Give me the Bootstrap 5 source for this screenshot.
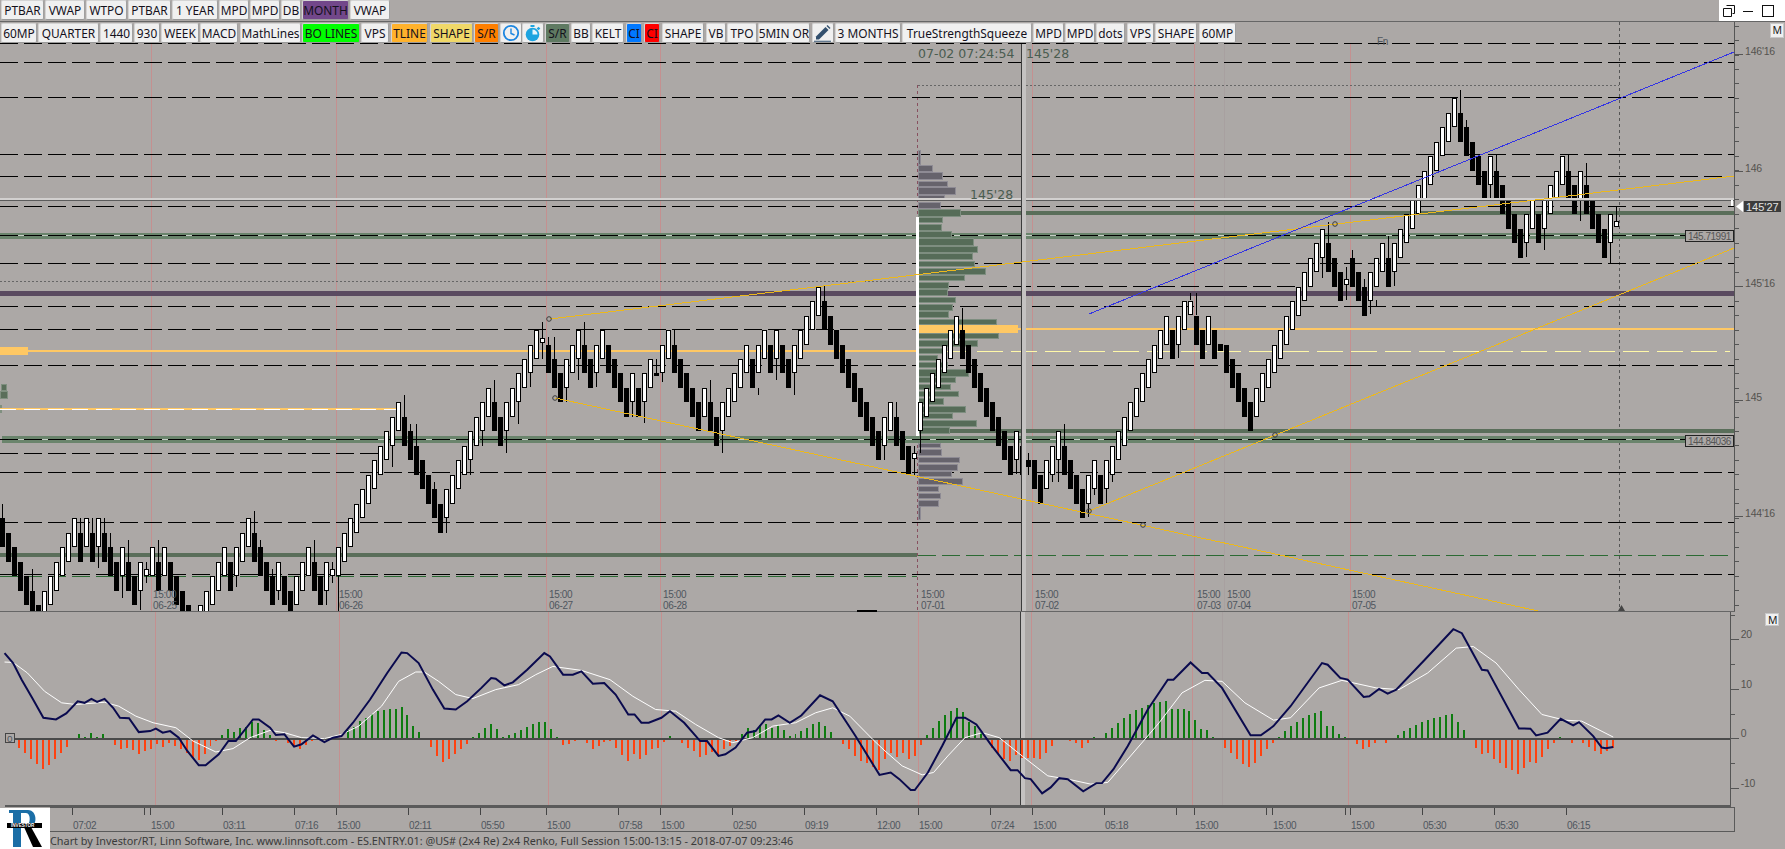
<!DOCTYPE html>
<html lang="en">
<head>
<meta charset="UTF-8">
<title>Investor/RT chart</title>
<link href="https://cdn.jsdelivr.net/npm/bootstrap@5.3.0/dist/css/bootstrap.min.css" rel="stylesheet">
<style>
body { background: #aca8a6; font-family: "Noto Sans", sans-serif; overflow: hidden; }
.topbar { height: 22px; border-bottom: 1px solid #666; }
.tb-row { height: 21px; }
.tb-row.over { top: 1px; left: 0; z-index: 5; }
.tb { padding: 0; height: 20px; font-size: 11.9px; line-height: 18px; color: #14101c; background: #f0f0f0; border: 1px solid #d4d4d4; border-right-color: #a0a0a0; border-bottom-color: #9a9a9a; border-radius: 2px; white-space: nowrap; overflow: hidden; display: flex; align-items: center; justify-content: center; }
.tb.month { background: #72478a; }
.tb.lime { background: #00ff00; }
.tb.tline { background: #ffb22c; }
.tb.shape { background: #f0d868; }
.tb.orange { background: #ff7f00; }
.tb.sr { background: #5f7a62; }
.tb.blue { background: #0078ff; }
.tb.red { background: #ff0000; }
.winctl { width: 66px; height: 21px; background: #fff; }
svg { display: block; }
svg text { font-family: "Liberation Sans", sans-serif; font-size: 10px; letter-spacing: -0.35px; fill: #4f565e; }
svg text.big { font-family: "DejaVu Sans", sans-serif; font-size: 12.5px; letter-spacing: 0; fill: #4a5c50; }
svg text.ax { font-size: 10.5px; letter-spacing: -0.2px; fill: #55534f; }
svg text.ladder { font-size: 10px; letter-spacing: -0.5px; fill: #555; }
svg text.cur { font-size: 11px; letter-spacing: 0; fill: #e2e2e2; }
svg text.mbtn { font-family: "Noto Sans", sans-serif; font-size: 10.5px; letter-spacing: 0; fill: #222; }
.footer { height: 42px; }
.logo { width: 50px; height: 41px; margin-top: 1px; background: #fff; }
.logo text.inv { font-family: "Liberation Sans", sans-serif; font-weight: 700; font-size: 4.6px; letter-spacing: 0; fill: #fff; }
.status { height: 17px; line-height: 17px; font-size: 10.85px; color: #3a3a3a; white-space: nowrap; }
.axis-box { width: 1685px; }
</style>
</head>
<body>
<div class="d-flex flex-column vh-100">
  <div class="topbar d-flex align-items-start">
    <div id="row1" class="tb-row d-flex mt-0"></div>
    <div class="winctl ms-auto d-flex align-items-center justify-content-between px-1">
      <svg width="12" height="12" viewBox="0 0 12 12"><path d="M3.5 .5h8v8h-2M.5 3.5h8v8h-8z" fill="none" stroke="#111"/></svg>
      <svg width="12" height="12" viewBox="0 0 12 12"><path d="M1 6.5h10" stroke="#111"/></svg>
      <svg width="12" height="12" viewBox="0 0 12 12"><rect x=".5" y=".5" width="11" height="11" fill="none" stroke="#111"/></svg>
      <span></span>
    </div>
  </div>
  <div class="position-relative">
    <div id="row2" class="tb-row over d-flex position-absolute"></div>
    <svg id="price" width="1785" height="590" viewBox="0 22 1785 590"></svg>
  </div>
  <svg id="osc" width="1785" height="196" viewBox="0 612 1785 196"></svg>
  <div class="footer d-flex">
    <div class="logo">
      <svg width="50" height="41" viewBox="0 0 50 41">
        <path d="M9 2H28C38 2 38 20 28 20H21V39H13V5H9zM21 5V17H26C31 17 31 5 26 5z" fill="#1b6ea6" fill-rule="evenodd"/>
        <polygon points="24,19 31,19 42,39 33,39" fill="#000"/>
        <rect x="7" y="15" width="35" height="5" fill="#000"/>
        <text class="inv" x="11" y="19">INVESTOR</text>
      </svg>
    </div>
    <div class="axis-box">
      <svg id="taxis" width="1685" height="25" viewBox="50 807 1685 25"></svg>
      <div class="status">Chart by Investor/RT, Linn Software, Inc. www.linnsoft.com - ES.ENTRY.01: @US# (2x4 Re) 2x4 Renko, Full Session 15:00-13:15 - 2018-07-07 09:23:46</div>
    </div>
  </div>
</div>

<script src="https://cdn.jsdelivr.net/npm/bootstrap@5.3.0/dist/js/bootstrap.bundle.min.js"></script>
<script>
const clockIcon = '<svg width="18" height="18" viewBox="0 0 18 18"><circle cx="9" cy="9" r="7.2" fill="none" stroke="#1c86e0" stroke-width="1.8"/><path d="M9 4.5V9.5L12.5 11" fill="none" stroke="#1c86e0" stroke-width="1.4"/></svg>';
const watchIcon = '<svg width="18" height="18" viewBox="0 0 18 18"><circle cx="8.5" cy="10.5" r="6.8" fill="#1ea4e0"/><rect x="6.5" y="1" width="4" height="2" fill="#1ea4e0"/><rect x="13.2" y="3.2" width="2.6" height="2.6" fill="#1ea4e0" transform="rotate(45 14.5 4.5)"/><path d="M8.5 10.5V5.5A5 5 0 0 1 13.5 10.5z" fill="#e6f5fc"/></svg>';
const pencilIcon = '<svg width="18" height="18" viewBox="0 0 18 18"><path d="M2 12.5L11.5 3l3 3L5 15.5H2z" fill="#33506e"/><path d="M12.5 2l1-1 3 3-1 1z" fill="#33506e"/><path d="M0 17.2H17" stroke="#33506e" stroke-width="1.1"/></svg>';

const row1 = [["PTBAR",1,44],["VWAP",45,85],["WTPO",86,127],["PTBAR",128,171],["1 YEAR",172,218],["MPD",219,249],["MPD",250,280],["DB",281,301],["MONTH",302,349,"month"],["VWAP",350,390]];
const row2 = [["60MP",1,37],["QUARTER",38,99],["1440",100,133],["930",134,160],["WEEK",161,199],["MACD",200,238],["MathLines",240,301],["BO LINES",302,360,"lime"],["VPS",361,389],["TLINE",391,428,"tline"],["SHAPE",430,473,"shape"],["S/R",474,499,"orange"],[clockIcon,500,522],[watchIcon,522,544],["S/R",545,570,"sr"],["BB",571,591],["KELT",592,624],["CI",626,642,"blue"],["CI",644,660,"red"],["SHAPE",662,704],["VB",706,726],["TPO",727,757],["5MIN OR",758,810],[pencilIcon,812,834],["3 MONTHS",835,901],["TrueStrengthSqueeze",902,1032],["MPD",1033,1064],["MPD",1065,1095],["dots",1096,1125],["VPS",1127,1154],["SHAPE",1155,1197],["60MP",1199,1236]];

function fillRow(id, items) {
    let prev = 0, html = "";
    items.forEach(it => {
        html += `<button type="button" class="btn tb ${it[3] || ""}" style="width:${it[2] - it[1]}px;margin-left:${it[1] - prev}px">${it[0]}</button>`;
        prev = it[2];
    });
    document.getElementById(id).innerHTML = html;
}
fillRow("row1", row1);
fillRow("row2", row2);

// small helpers that write svg strings
const ln = (x1, y1, x2, y2, c, extra) => `<line x1="${x1}" y1="${y1}" x2="${x2}" y2="${y2}" stroke="${c}" ${extra || ""}/>`;
const crisp = 'shape-rendering="crispEdges"';
const rc = (x, y, w, h, c, extra) => `<rect x="${x}" y="${y}" width="${w}" height="${h}" fill="${c}" ${crisp} ${extra || ""}/>`;
const tx = (x, y, s, cls) => `<text x="${x}" y="${y}" class="${cls || ""}">${s}</text>`;

const AXIS = 1734;
const DAYS = [151, 336, 546, 660, 1032, 1194, 1350];
const GREEN = "#5a6e5a", GREEN2 = "#6a846c", ORANGE = "#ffc864", PALE = "#fff8a8", YEL = "#ecb81c";

let p = "";

// day separators
DAYS.forEach(x => { p += ln(x + .5, 44, x + .5, 611, "#c49090", crisp); });
p += ln(1224.5, 44, 1224.5, 611, "#a8a0a0", crisp);
p += ln(917.5, 85, 917.5, 611, "#88505f", crisp + ' stroke-dasharray="3 3"');
p += ln(1619.5, 22, 1619.5, 611, "#555", crisp + ' stroke-dasharray="3 3"');
p += ln(918, 85.5, 1619, 85.5, "#666", crisp + ' stroke-dasharray="2 2"');
p += ln(0, 281.5, 917, 281.5, "#666", crisp + ' stroke-dasharray="2 2"');

// bands
p += rc(0, 291, AXIS, 5, "#5a4a60");
p += rc(918, 211, AXIS - 918, 4, GREEN);
p += rc(950, 429, AXIS - 950, 4, GREEN);
p += rc(0, 553, 917, 4, GREEN);
p += rc(0, 233, AXIS, 6, GREEN2) + ln(0, 235.5, AXIS, 235.5, "#c4ccc4", crisp);
p += rc(2, 436, AXIS - 2, 7, GREEN2) + ln(2, 439.5, AXIS, 439.5, "#c4ccc4", crisp);

// left side leftovers of the old profile
p += rc(1, 384, 5, 6, GREEN, 'stroke="#7f8f7f"') + rc(0, 391, 7, 7, GREEN, 'stroke="#7f8f7f"') + rc(0, 405, 2, 8, "#7f8f7f");

// black dashed levels
const dashed = [[43,0,AXIS],[62,0,AXIS],[97,0,AXIS],[154,0,AXIS],[176,0,AXIS],[206,0,AXIS],[235,0,1685],[263,0,AXIS],[286,917,1295],[306,0,AXIS],[329,0,1022],[365,0,AXIS],[439,0,1685],[453,0,383],[472,0,AXIS],[522,0,AXIS],[574,0,AXIS]];
dashed.forEach(d => { p += ln(d[1], d[0] + .5, d[2], d[0] + .5, "#000", crisp + ' stroke-dasharray="18 6"'); });
p += ln(0, 576.5, 917, 576.5, "#2c6a34", crisp + ' stroke-dasharray="18 6"');
p += ln(918, 555.5, AXIS, 555.5, "#2c6a34", crisp + ' stroke-dasharray="18 6"');

// orange levels
p += rc(0, 347, 28, 8, ORANGE) + rc(28, 350, 915, 2, ORANGE);
p += ln(943, 351.5, 1730, 351.5, PALE, crisp + ' stroke-dasharray="26 8"');
p += rc(0, 408, 396, 2, ORANGE) + ln(0, 409.5, 396, 409.5, "#fff", crisp + ' stroke-dasharray="16 8"');

// volume profile: top, bottom, right edge
const vp = [[150,165,920,0],[165,172,932,0],[172,180,942,0],[181,187,947,0],[187,195,955,0],[195,201,944,0],[202,209,940,0],
[209,217,960,1],[217,223,942,1],[224,231,941,1],[231,238,951,1],[238,246,973,1],[246,253,977,1],[253,260,972,1],[261,267,974,1],[268,275,985,1],[275,281,964,1],[282,289,948,1],[289,296,947,1],[297,303,955,1],[304,311,952,1],[311,318,948,1],[319,325,996,1],[333,339,998,1],[340,347,977,1],[348,354,943,1],[355,361,937,1],[362,368,947,1],[369,377,968,1],[377,383,955,1],[384,390,950,1],[391,397,958,1],[398,405,943,1],[406,413,965,1],[413,419,952,1],[420,427,976,1],[427,434,949,1],
[443,448,940,0],[449,456,941,0],[457,463,959,0],[464,471,957,0],[471,477,951,0],[478,485,962,0],[486,492,938,0],[493,499,940,0],[500,507,938,0],[507,520,920,0]];
vp.forEach(b => {
    p += rc(918.5, b[0] + .5, b[2] - 918.5, b[1] - b[0] - 1, b[3] ? "#566c58" : "#66636c", `stroke="${b[3] ? "#7e8e80" : "#8e8b94"}"`);
});
p += rc(918, 325, 100, 8, ORANGE);
p += rc(1018, 328, AXIS - 1018, 2, ORANGE);
p += rc(916, 217, 3, 219, "#fff");

// renko bars: [colour, top level from, top level to], d/e = short bar with pixel extent
const runs = [['b',0,-6],['w',-5,0],['b',-1],['w',0],['b',-1],['w',0],['b',-1,-3],['w',-2],['b',-3,-4],['w',-3],['d',569,576],['w',-2],['b',-3],['w',-2],['b',-3,-7],['w',-6,-2],['b',-3],['w',-2,0],['b',-1,-4],['w',-3],['b',-4,-5],['w',-4,-2],['b',-3,-4],['w',-3],['d',569,576],['w',-2,8],['b',7,1],['w',2,9],['b',8,7],['w',8,13],['d',338,343],['b',12,10],['w',11,13],['b',12,11],['w',12,13],['b',12,9],['w',10],['b',9],['w',10,11],['e',373,376],['w',12,13],['b',12,8],['w',9],['b',8,7],['w',8,12],['b',11],['w',12,13],['b',12],['w',13],['b',12,11],['w',12,16],['b',15,6],['w',7,8],['b',7,5],['d',453,459],['w',8,14],['b',13,5],['w',6],['b',5],['e',460,467],['b',4,3],['w',4,6],['b',5,2],['w',3,4],['b',3],['w',4,14],['b',13],['w',14,15],['d',301,315],['b',14,13],['w',14],['b',13],['e',344,351],['b',12,8],['w',9,20],['b',19,17],['d',279,285],['b',18,16],['w',17,19],['b',18],['w',19,29],['b',28,24],['w',25],['b',24,20],['w',21,22],['b',21],['w',22,25],['b',24,23],['w',24],['b',23,20],['w',21],['d',221,227]];
const wicks = [[0,504,518],[5,569,610],[13,518,533],[15,518,533],[16,546,568],[17,518,533],[18,533,547],[20,575,598],[21,540,562],[23,590,610],[24,562,583],[26,540,562],[39,575,587],[42,511,533],[43,540,547],[45,569,576],[46,590,600],[52,540,562],[54,590,605],[55,562,583],[56,575,611],[65,446,467],[67,395,417],[68,424,431],[69,424,446],[72,482,489],[74,517,533],[78,460,475],[80,431,446],[82,380,402],[84,431,453],[86,402,424],[88,373,387],[90,322,359],[91,337,345],[92,337,359],[94,388,402],[96,358,380],[97,322,345],[99,373,387],[105,402,417],[107,402,423],[109,359,373],[110,373,382],[112,330,345],[118,380,402],[120,431,453],[126,388,395],[129,359,380],[132,373,395],[137,286,301],[147,446,460],[149,402,417],[152,446,475],[153,431,453],[160,308,330],[169,446,474],[170,446,475],[171,453,475],[175,475,482],[176,460,482],[177,424,446],[181,503,517],[182,488,495],[184,489,503],[185,475,482],[196,343,358],[198,293,300],[199,293,315],[220,257,278],[221,222,243],[224,267,300],[225,250,258],[227,279,287],[228,300,314],[229,300,307],[231,236,258],[232,271,286],[243,90,113],[244,120,127],[248,184,199],[249,154,171],[254,242,257],[257,227,250],[261,154,171],[263,198,221],[264,163,185],[268,242,263],[269,207,221]];
const yLev = n => Math.round(518.3 - 14.48 * n);
let bars = [], k = 0;
runs.forEach(r => {
    if (r[0] === 'd' || r[0] === 'e') { bars.push({k: k++, c: r[0] === 'd' ? 'w' : 'b', t: r[1], b: r[2]}); return; }
    const to = r.length > 2 ? r[2] : r[1], dir = to >= r[1] ? 1 : -1;
    for (let n = r[1]; n !== to + dir; n += dir) bars.push({k: k++, c: r[0], t: yLev(n), b: yLev(n - 2)});
});
wicks.forEach(w => { p += rc(6 * w[0] + 2, w[1], 1, w[2] - w[1], "#000"); });
bars.forEach(b => {
    const x = 6 * b.k;
    if (b.c === 'b') p += rc(x, b.t, 5, b.b - b.t, "#000");
    else p += rc(x + .5, b.t + .5, 4, b.b - b.t - 1, "#fff", 'stroke="#000"');
});
p += rc(1609, 263, 10, 1, "#000");

// white price line
p += rc(0, 198, AXIS, 2, "#d2d0cf") + rc(0, 200, AXIS, 1, "#5c5c5c");

// crosshair
p += rc(1021, 44, 1, 568, "#3c3c3c") + rc(1022, 44, 4, 568, "#c4c2c1");

// trend lines
p += ln(550, 319, AXIS, 176, YEL, crisp);
p += ln(555, 398, 1543, 612, YEL, crisp);
p += ln(1089, 511, AXIS, 248, YEL, crisp);
p += ln(1089, 314, AXIS, 52, "#3434e4", crisp);
[[549,319],[555,398],[1335,224],[1143,525],[1089,511],[1275,435]].forEach(c => {
    p += `<circle cx="${c[0]}" cy="${c[1]}" r="2.3" fill="none" stroke="#3c3c3c"/>`;
});

// labels on the chart
[[153,"06-25"],[339,"06-26"],[549,"06-27"],[663,"06-28"],[921,"07-01"],[1035,"07-02"],[1197,"07-03"],[1227,"07-04"],[1352,"07-05"]].forEach(l => {
    p += tx(l[0], 598, "15:00") + tx(l[0], 609, l[1]);
});
p += tx(918, 58, "07-02 07:24:54", "big") + tx(1026, 58, "145'28", "big") + tx(970, 199, "145'28", "big");
p += tx(1377, 45, "Fn");

// level boxes
[[230,"145.71991"],[435,"144.84036"]].forEach(l => {
    p += rc(1685.5, l[0] + .5, 48, 11, "#aca8a6", 'stroke="#222"') + tx(1688, l[0] + 10, l[1], "ladder");
});

// price axis
p += rc(AXIS, 22, 1, 590, "#555");
for (let i = -2; i < 40; i++) { const y = Math.round(54.5 + 14.48 * i); p += rc(AXIS + 1, y, 4, 1, "#555"); }
[[54,"146'16"],[171,"146"],[286,"145'16"],[400,"145"],[516,"144'16"]].forEach(l => {
    p += rc(AXIS + 1, l[0], 8, 1, "#555") + tx(1745, l[0] + 1, l[1], "ax");
});
p += rc(1731, 200, 2, 6, "#fff");
p += '<polygon points="1736,206.5 1743,201 1743,212" fill="#fff"/>';
p += rc(1744, 201, 37, 11, "#3c3c3c") + tx(1746, 210.5, "145'27", "cur");
p += rc(1770, 23, 13, 14, "#f0f0f0", 'stroke="#c8c8c8"') + tx(1772.5, 34, "M", "mbtn");
p += '<polygon points="1618,611 1621.5,605 1625,611" fill="#444"/>';
p += rc(0, 611, AXIS + 1, 1, "#666") + rc(857, 610, 20, 2, "#000");
document.getElementById("price").innerHTML = p;

// indicator panel
const Z0 = 739, zy = v => Z0 - 4.97 * v;
const hist = [0,0,-25,-40,-58,-75,-88,-78,-58,-40,-22,-3,13,4,16,4,13,0,-16,-30,-25,-33,-45,-35,-30,-15,-22,-12,-20,-30,-42,-55,-62,-45,-20,-5,10,28,18,30,35,50,45,25,10,-5,0,-12,-22,-28,-18,-6,0,0,0,0,0,25,35,52,62,72,82,85,88,90,94,70,38,18,-3,-22,-50,-67,-58,-45,-30,-14,3,15,30,43,28,3,10,15,25,33,42,50,48,28,3,-18,-15,-6,0,-12,-28,-20,-8,-5,-25,-48,-65,-45,-60,-48,-28,-25,-8,7,0,-12,-25,-35,-52,-48,-38,-50,-30,-20,-5,12,30,25,40,42,30,40,25,8,12,22,32,42,50,38,18,0,-15,-30,-50,-65,-72,-82,-92,-60,-40,-52,-42,-60,-50,-18,10,30,52,70,82,93,78,50,38,18,-3,-25,-45,-58,-65,-48,-55,-55,-55,-58,-40,-20,0,0,-5,-12,-25,-10,5,0,15,30,45,60,72,85,92,100,108,110,112,88,88,88,82,55,28,25,5,-3,-25,-42,-58,-75,-82,-72,-50,-28,-12,5,22,38,50,62,70,75,82,38,36,12,5,-3,-15,-30,-22,-10,0,-10,0,10,22,32,40,48,55,60,65,70,72,50,25,0,-25,-45,-40,-58,-70,-85,-92,-103,-85,-68,-70,-52,-30,-10,5,0,-10,0,-10,-22,-35,-45,-35,-25];
const nA = [0,130,15,160,30,210,50,270,68,325,90,330,108,312,128,275,140,280,152,268,162,277,175,268,190,295,202,325,218,326,235,368,255,365,265,358,277,370,290,365,305,385,320,425,340,468,352,468,375,435,392,395,405,395,435,330,445,330,465,355,475,377,490,375,507,412,520,405,540,378,560,398,575,385,590,380,610,340,640,270,670,190,695,128,705,130,725,160,750,240,770,297,790,300,810,275,835,235,852,205,860,207,875,227,890,218,915,180,945,130,955,140,978,195,995,195,1010,185,1030,222,1050,220,1070,255,1092,315,1103,315,1115,340,1128,340,1150,325,1165,305,1190,340,1218,395,1230,395,1250,440,1262,435,1280,415,1300,370,1315,365,1332,330,1343,330,1355,318,1375,340,1395,318,1428,257,1450,275,1490,380,1532,497];
const nB = [10,490,25,510,45,543,52,543,75,490,100,410,125,325,140,325,160,345,185,405,220,483,232,483,245,507,255,510,275,553,290,535,305,507,320,510,347,547,370,522,380,522,400,480,425,410,460,300,495,210,505,210,535,158,555,190,565,190,590,235,640,378,658,378,680,350,710,290,765,160,775,165,797,205,810,210,838,262,848,260,865,238,880,252,895,240,945,150,995,58,1010,70,1045,180,1055,182,1110,357,1130,358,1140,378,1160,370,1183,328,1205,348,1215,338,1240,380,1255,415,1262,417,1275,413];
const sA = [0,157,15,158,40,190,70,245,100,280,125,285,175,278,200,290,230,320,260,340,300,355,330,395,370,428,400,418,430,385,465,363,490,370,520,385,560,388,590,375,620,350,660,290,690,215,720,187,735,187,760,215,790,255,820,267,860,240,900,225,930,195,960,170,1010,182,1060,210,1100,260,1140,300,1175,305,1210,345,1250,385,1275,400,1310,385,1345,350,1385,340,1420,310,1450,295,1480,320,1520,390];
const sB = [0,425,30,470,65,497,85,490,110,440,140,385,170,370,200,385,240,440,285,500,320,510,360,525,390,520,430,440,480,340,520,250,560,212,590,215,630,280,680,332,710,325,760,235,800,212,860,235,900,240,950,190,1000,115,1030,110,1070,160,1110,240,1150,315,1190,332,1220,335,1275,383];
function toPts(arr, ox) {
    let out = [];
    for (let i = 0; i < arr.length; i += 2) out.push((ox + arr[i] / 1.742).toFixed(1) + "," + (610 + arr[i + 1] / 3).toFixed(1));
    return out;
}
let o = "";
DAYS.forEach(x => { o += ln(x + .5, 612, x + .5, 807, "#c49090", crisp); });
o += ln(918.5, 612, 918.5, 807, "#c49090", crisp);
o += ln(1224.5, 612, 1224.5, 807, "#a8a0a0", crisp);
o += rc(1021, 612, 1, 195, "#3c3c3c") + rc(1022, 612, 4, 195, "#c4c2c1");
hist.forEach((h, i) => {
    if (!h) return;
    const hp = Math.abs(h) / 3;
    o += rc(6 * i + 2, h > 0 ? Z0 - hp : Z0 + 1, 2, hp, h > 0 ? "#0e7c10" : "#ff4210");
});
o += rc(0, Z0, AXIS, 2, "#4a4a4a");
o += `<polyline points="${toPts(sA, 0).concat(toPts(sB, 885)).join(" ")}" fill="none" stroke="#fff" stroke-width="1"/>`;
o += `<polyline points="${toPts(nA, 0).concat(toPts(nB, 885)).join(" ")}" fill="none" stroke="#0a0a4e" stroke-width="2"/>`;
o += rc(.5, 734.5, 9, 9, "#aca8a6", 'stroke="#444"') + tx(2.5, 743, "0");
o += rc(AXIS, 612, 1, 195, "#555");
[20, 10, 0, -10].forEach(v => {
    o += rc(AXIS + 1, zy(v), 8, 1, "#555") + tx(1745, zy(v) - 1, v, "ax");
});
[25, 15, 5, -5, -15].forEach(v => { o += rc(AXIS + 1, zy(v), 4, 1, "#555"); });
o += rc(1770, 614, 13, 12, "#f0f0f0", 'stroke="#c8c8c8"') + tx(1772.5, 624, "M", "mbtn");
o += rc(0, 806, AXIS + 1, 2, "#5a5a5a");
document.getElementById("osc").innerHTML = o;

// time axis
const times = [[72,"07:02"],[150,"15:00"],[222,"03:11"],[294,"07:16"],[336,"15:00"],[408,"02:11"],[480,"05:50"],[546,"15:00"],[618,"07:58"],[660,"15:00"],[732,"02:50"],[804,"09:19"],[876,"12:00"],[918,"15:00"],[990,"07:24"],[1032,"15:00"],[1104,"05:18"],[1194,"15:00"],[1272,"15:00"],[1350,"15:00"],[1422,"05:30"],[1494,"05:30"],[1566,"06:15"]];
let t = rc(50, 807, 1685, 1, "#5a5a5a");
times.forEach(m => { t += rc(m[0], 808, 1, 7, "#444") + tx(m[0] + 1, 829, m[1]); });
[144, 1176, 1266, 1345].forEach(x => { t += rc(x, 808, 1, 7, "#444"); });
t += rc(50, 831, 1685, 1, "#5a5a5a") + rc(1734, 807, 1, 25, "#5a5a5a");
document.getElementById("taxis").innerHTML = t;
</script>
</body>
</html>
